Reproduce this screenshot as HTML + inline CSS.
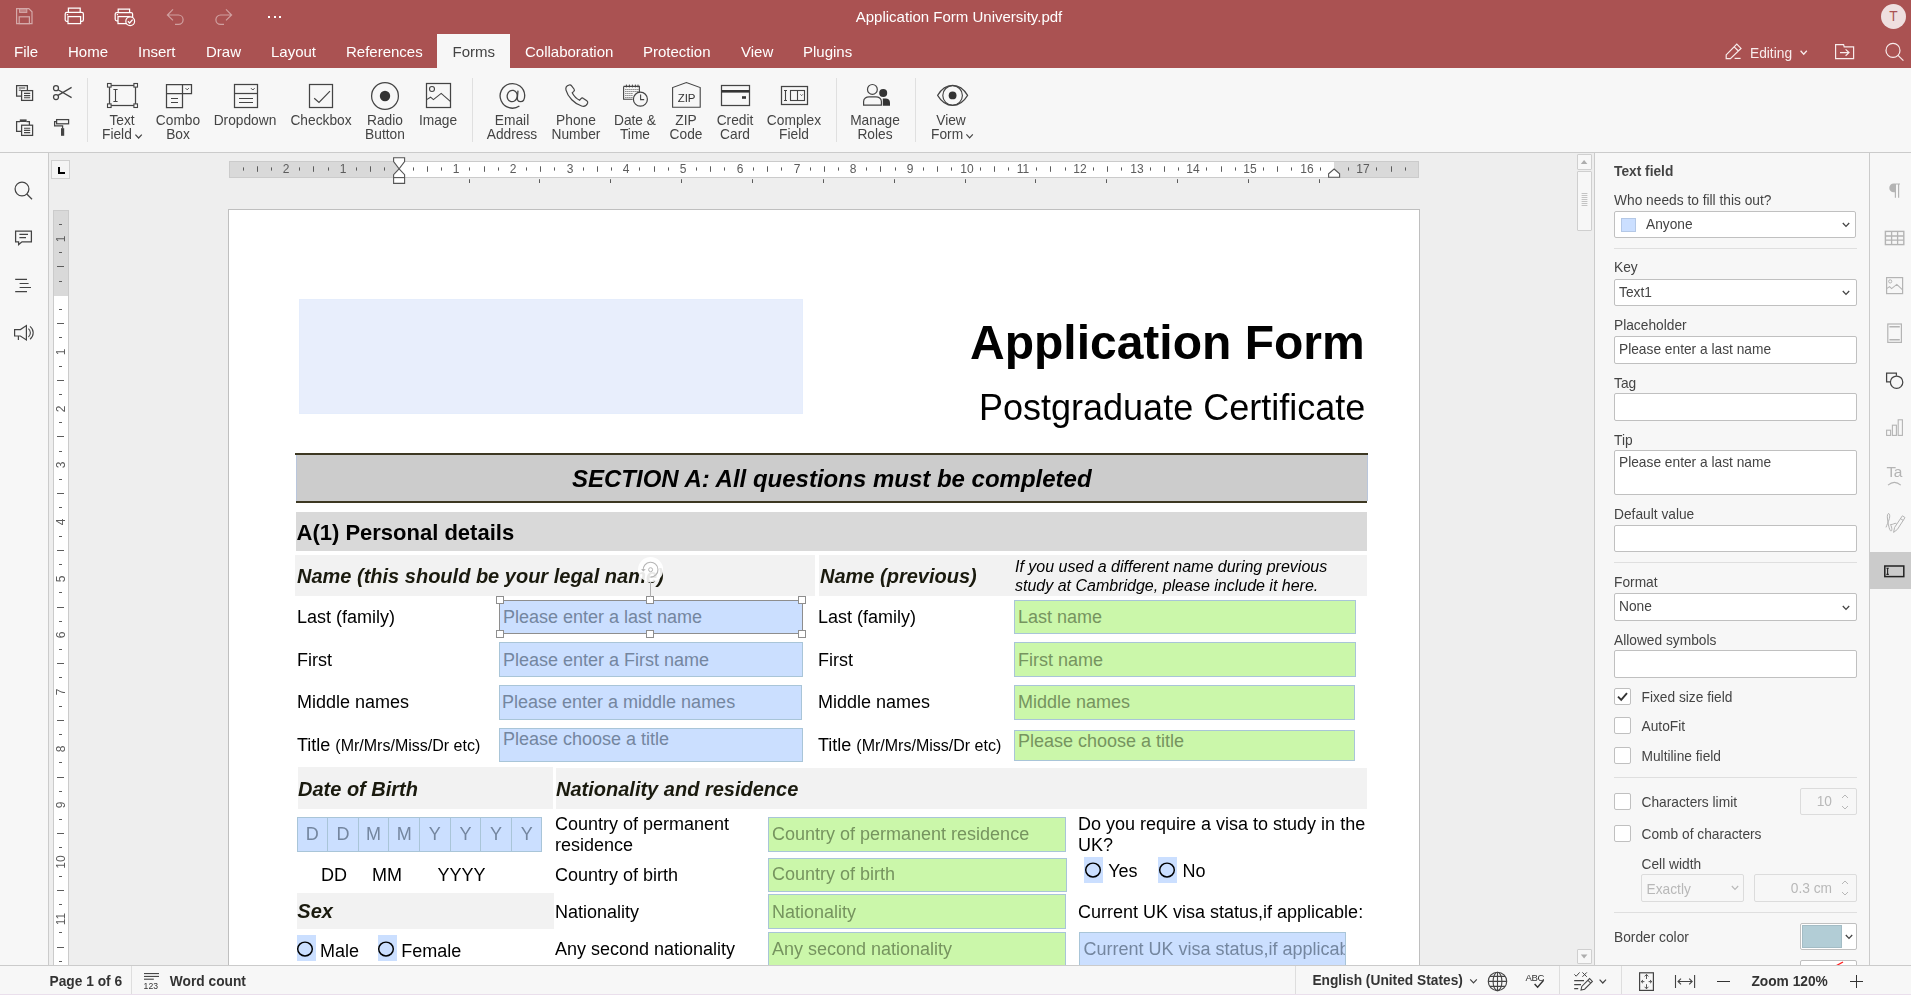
<!DOCTYPE html>
<html>
<head>
<meta charset="utf-8">
<title>Application Form University.pdf</title>
<style>
*{box-sizing:border-box;margin:0;padding:0}
html,body{width:1911px;height:995px;overflow:hidden;background:#f7f7f7;font-family:"Liberation Sans",sans-serif;color:#444}
body{opacity:.999}
.abs{position:absolute}
#hdr{position:absolute;left:0;top:0;width:1911px;height:68px;background:#aa5252}
#hdr .ttl{position:absolute;left:0;top:8px;width:1918px;text-align:center;font-size:15px;line-height:17px;color:#fff}
.tab{position:absolute;top:43px;font-size:15px;line-height:17px;color:#fff;white-space:nowrap}
#tabact{position:absolute;left:437px;top:34px;width:73px;height:34px;background:#f7f7f7}
#tabact span{position:absolute;left:15.6px;top:9px;font-size:15px;line-height:17px;color:#444}
#tb{position:absolute;left:0;top:68px;width:1911px;height:85px;background:#f7f7f7;border-bottom:1px solid #cbcbcb}
.cap{position:absolute;font-size:13.75px;line-height:14px;color:#444;text-align:center;white-space:nowrap;transform:translateX(-50%)}
.sep{position:absolute;top:10px;width:1px;height:64px;background:#e0e0e0}
svg{position:absolute;overflow:visible}
#left{position:absolute;left:0;top:153px;width:49px;height:812px;background:#f7f7f7;border-right:1px solid #cbcbcb}
#doc{position:absolute;left:49px;top:153px;width:1545px;height:812px;background:#eeeeee;overflow:hidden}
#rp{position:absolute;left:1594px;top:153px;width:276px;height:812px;background:#f7f7f7;border-left:1px solid #cbcbcb;overflow:hidden}
#ri{position:absolute;left:1869px;top:153px;width:42px;height:812px;background:#f7f7f7;border-left:1px solid #cbcbcb}
#sb{position:absolute;left:0;top:965px;width:1911px;height:30px;background:#f7f7f7;border-top:1px solid #cbcbcb}
.lbl{position:absolute;font-size:13.75px;line-height:15px;color:#444;white-space:nowrap}
.inp{position:absolute;background:#fff;border:1px solid #c0c0c0;border-radius:2px;font-size:13.75px;line-height:15px;color:#444;white-space:nowrap}
.inp span{position:absolute;left:4px;top:5px}
.chk{position:absolute;width:16px;height:16px;background:#fff;border:1px solid #c0c0c0;border-radius:2px}
.hr{position:absolute;left:19px;width:243px;height:1px;background:#dfdfdf}
#page{position:absolute;left:179px;top:56px;width:1192px;height:800px;background:#fff;border:1px solid #bfbfbf;border-bottom:none}
.t{position:absolute;white-space:nowrap;color:#000}
.fb{position:absolute;background:#cbdfff;border:1px solid #a9c5d8}
.fg{position:absolute;background:#cbf7aa;border:1px solid #a9c5d8}
.ph{position:absolute;white-space:nowrap;font-size:18px;line-height:20px}
.fb .ph{color:#74869f}
.fg .ph{color:#76945f}
</style>
</head>
<body>
<div id="hdr">
  <div class="ttl">Application Form University.pdf</div>
  <div id="tabact"><span>Forms</span></div>
  <div class="tab" style="left:14px">File</div>
  <div class="tab" style="left:68px">Home</div>
  <div class="tab" style="left:138px">Insert</div>
  <div class="tab" style="left:206px">Draw</div>
  <div class="tab" style="left:271px">Layout</div>
  <div class="tab" style="left:346px">References</div>
  <div class="tab" style="left:525px">Collaboration</div>
  <div class="tab" style="left:643px">Protection</div>
  <div class="tab" style="left:741px">View</div>
  <div class="tab" style="left:803px">Plugins</div>
  <div class="tab" style="left:1750px;top:45.5px;font-size:13.75px;line-height:15px;color:#f8ecec">Editing</div>
  <!-- save (disabled) -->
<svg style="left:16px;top:8px;opacity:.5" width="17" height="17" viewBox="0 0 17 17"><path d="M0.6 0.6 H12.8 L16 3.8 V15.6 H0.6 Z" fill="none" stroke="#fff" stroke-width="1.2"/><rect x="3.6" y="0.6" width="7.2" height="3.8" fill="#fff" fill-opacity=".55" stroke="#fff" stroke-width="1"/><rect x="3.2" y="8.8" width="10.2" height="6.8" fill="none" stroke="#fff" stroke-width="1.2"/></svg>
<!-- print -->
<svg style="left:64px;top:7px" width="21" height="18" viewBox="0 0 21 18"><rect x="1.2" y="5.4" width="18.2" height="9" rx="1.6" fill="none" stroke="#fff" stroke-width="1.25"/><path d="M4.4 5.4 V1.2 H16.2 V5.4" fill="none" stroke="#fff" stroke-width="1.25"/><rect x="4" y="9.6" width="12.6" height="7" fill="#aa5252" stroke="#fff" stroke-width="1.25"/><rect x="2.8" y="7" width="1.4" height="1.4" fill="#fff"/></svg>
<!-- quick print -->
<svg style="left:114px;top:8px" width="22" height="19" viewBox="0 0 22 19"><rect x="1.2" y="4.6" width="17.4" height="8.2" rx="1.5" fill="none" stroke="#fff" stroke-width="1.25"/><path d="M4.2 4.6 V1.2 H15.6 V4.6" fill="none" stroke="#fff" stroke-width="1.25"/><rect x="4" y="8.6" width="11.6" height="7" fill="#aa5252" stroke="#fff" stroke-width="1.25"/><rect x="2.8" y="6" width="1.3" height="1.3" fill="#fff"/><circle cx="16.2" cy="13.2" r="4.4" fill="#aa5252" stroke="#fff" stroke-width="1.2"/><path d="M13.9 13.3 L15.6 15 L18.6 11.6" fill="none" stroke="#fff" stroke-width="1.3"/></svg>
<!-- undo (disabled) -->
<svg style="left:166px;top:8px;opacity:.45" width="19" height="18" viewBox="0 0 19 18"><path d="M7 1.4 L1.4 7 L7 12.4 M1.4 7 H12.4 A4.7 4.7 0 0 1 12.4 16.4 H9" fill="none" stroke="#fff" stroke-width="1.2"/></svg>
<!-- redo (disabled) -->
<svg style="left:215px;top:8px;opacity:.45" width="19" height="18" viewBox="0 0 19 18"><path d="M11 1.4 L16.6 7 L11 12.4 M16.6 7 H5.6 A4.7 4.7 0 0 0 5.6 16.4 H9" fill="none" stroke="#fff" stroke-width="1.2"/></svg>
<!-- more -->
<div class="abs" style="left:268px;top:16px;width:2px;height:2px;background:#fff"></div>
<div class="abs" style="left:273.5px;top:16px;width:2px;height:2px;background:#fff"></div>
<div class="abs" style="left:279px;top:16px;width:2px;height:2px;background:#fff"></div>
<!-- avatar -->
<div class="abs" style="left:1881px;top:4px;width:25px;height:25px;border-radius:50%;background:#efdfdf;color:#aa5252;font-size:13.75px;line-height:25px;text-align:center">T</div>
<!-- pencil -->
<svg style="left:1725px;top:43px" width="18" height="17" viewBox="0 0 18 17"><path d="M1.2 11.8 L11.8 1.2 L16 5.4 L5.4 15.6 H1.2 Z M9.2 3.8 L13.4 8" fill="none" stroke="#f8ecec" stroke-width="1.2"/><path d="M9.6 15.4 H15.6" stroke="#f8ecec" stroke-width="1.2"/></svg>
<svg style="left:1800px;top:50px" width="8" height="6" viewBox="0 0 8 6"><path d="M0.6 0.8 L3.7 4.2 L6.8 0.8" fill="none" stroke="#f8ecec" stroke-width="1.3"/></svg>
<!-- folder -->
<svg style="left:1835px;top:44px" width="20" height="16" viewBox="0 0 20 16"><path d="M0.6 0.6 H8.6 L9.2 2.8 H18.6 V14.6 H0.6 Z" fill="none" stroke="#f8ecec" stroke-width="1.2"/><path d="M5 8.6 H14 M10.6 5.4 L14 8.6 L10.6 11.8" fill="none" stroke="#f8ecec" stroke-width="1.2"/></svg>
<!-- search -->
<svg style="left:1884px;top:42px" width="22" height="22" viewBox="0 0 22 22"><circle cx="9" cy="8.4" r="7" fill="none" stroke="#f8ecec" stroke-width="1.2"/><path d="M14 13.4 L19.4 18.6" stroke="#f8ecec" stroke-width="1.2"/></svg>

</div>
<div id="tb">
<div class="cap" style="left:122px;top:46px">Text</div>
<div class="cap" style="left:102px;top:60px;transform:none">Field</div>
<div class="cap" style="left:178px;top:46px">Combo</div>
<div class="cap" style="left:178px;top:60px">Box</div>
<div class="cap" style="left:245px;top:46px">Dropdown</div>
<div class="cap" style="left:321px;top:46px">Checkbox</div>
<div class="cap" style="left:385px;top:46px">Radio</div>
<div class="cap" style="left:385px;top:60px">Button</div>
<div class="cap" style="left:438px;top:46px">Image</div>
<div class="cap" style="left:512px;top:46px">Email</div>
<div class="cap" style="left:512px;top:60px">Address</div>
<div class="cap" style="left:576px;top:46px">Phone</div>
<div class="cap" style="left:576px;top:60px">Number</div>
<div class="cap" style="left:635px;top:46px">Date &amp;</div>
<div class="cap" style="left:635px;top:60px">Time</div>
<div class="cap" style="left:686px;top:46px">ZIP</div>
<div class="cap" style="left:686px;top:60px">Code</div>
<div class="cap" style="left:735px;top:46px">Credit</div>
<div class="cap" style="left:735px;top:60px">Card</div>
<div class="cap" style="left:794px;top:46px">Complex</div>
<div class="cap" style="left:794px;top:60px">Field</div>
<div class="cap" style="left:875px;top:46px">Manage</div>
<div class="cap" style="left:875px;top:60px">Roles</div>
<div class="cap" style="left:951px;top:46px">View</div>
<div class="cap" style="left:931px;top:60px;transform:none">Form</div>
<div class="sep" style="left:87px"></div>
<div class="sep" style="left:472px"></div>
<div class="sep" style="left:836px"></div>
<div class="sep" style="left:915px"></div>
<svg style="left:15px;top:16px;" width="20" height="18" viewBox="15 84 20 18" fill="none" stroke="#444" stroke-width="1.25"><path d="M27.4 90.5 V85.6 H16.6 V96 H21.5" /><path d="M18.8 88 H25.2 M18.8 90.2 H21" stroke-width="1"/><rect x="21.6" y="90.6" width="11" height="9.8" fill="#f7f7f7"/><path d="M24 93.4 H30.2 M24 95.6 H30.2 M24 97.8 H30.2" stroke-width="1.1"/></svg>
<svg style="left:52px;top:16px;" width="21" height="18" viewBox="52 84 21 18" fill="none" stroke="#444" stroke-width="1.25"><circle cx="56" cy="88.2" r="2.5"/><circle cx="56" cy="97" r="2.5"/><path d="M58 89.8 L71.6 97.6 M58 95.4 L71.6 87.4"/></svg>
<svg style="left:15px;top:50px;" width="20" height="19" viewBox="15 118 20 19" fill="none" stroke="#444" stroke-width="1.25"><path d="M20 121.6 H16.6 V131.4 H21.4 M26.4 121.6 H29.4 V125"/><rect x="19.8" y="119.4" width="6.8" height="2.6" fill="#444" stroke="none"/><rect x="21.6" y="125.2" width="11" height="10.2" fill="#f7f7f7"/><path d="M24 128.2 H30.2 M24 130.4 H30.2 M24 132.6 H30.2" stroke-width="1.1"/></svg>
<svg style="left:53px;top:50px;" width="18" height="19" viewBox="53 118 18 19" fill="none" stroke="#444" stroke-width="1.25"><rect x="56.6" y="119.6" width="12" height="4.2"/><path d="M56.6 121.6 H54.6 V125.8 H62.6 V128.4"/><rect x="61" y="128.2" width="3.2" height="7.6" fill="#444" stroke="none"/></svg>
<svg style="left:106px;top:14px;" width="34" height="28" viewBox="106 82 34 28" fill="none" stroke="#444" stroke-width="1.25"><rect x="109.5" y="85.5" width="26" height="20"/><rect x="107.5" y="83.5" width="3.6" height="3.6" fill="#f7f7f7" stroke-width="1.1"/><rect x="107.5" y="103.9" width="3.6" height="3.6" fill="#f7f7f7" stroke-width="1.1"/><rect x="133.9" y="83.5" width="3.6" height="3.6" fill="#f7f7f7" stroke-width="1.1"/><rect x="133.9" y="103.9" width="3.6" height="3.6" fill="#f7f7f7" stroke-width="1.1"/><path d="M115.5 89.5 V101.5 M113.4 89.5 H117.6 M113.4 101.5 H117.6" stroke-width="1.1"/></svg>
<svg style="left:134px;top:65px;" width="10" height="7" viewBox="134 133 10 7" fill="none" stroke="#444" stroke-width="1.25"><path d="M135.4 134.6 L138.6 138 L141.8 134.6" stroke-width="1.2"/></svg>
<svg style="left:965px;top:65px;" width="10" height="7" viewBox="965 133 10 7" fill="none" stroke="#444" stroke-width="1.25"><path d="M966.4 134.4 L969.6 137.8 L972.8 134.4" stroke-width="1.2"/></svg>
<svg style="left:165px;top:15px;" width="28" height="26" viewBox="165 83 28 26" fill="none" stroke="#444" stroke-width="1.25"><path d="M166.5 84.5 H191.5 V93.5 H182.5 V107.5 H166.5 Z M166.5 93.5 H182.5 M182.5 84.5 V93.5"/><path d="M185.6 88.2 L187.2 89.8 L188.8 88.2" stroke-width="1"/><path d="M171 98.5 H178 M171 102.5 H178" stroke-width="1.1"/></svg>
<svg style="left:233px;top:15px;" width="27" height="26" viewBox="233 83 27 26" fill="none" stroke="#444" stroke-width="1.25"><rect x="234.5" y="84.5" width="23" height="23"/><path d="M234.5 93.5 H257.5"/><path d="M251 88.2 L252.8 90 L254.6 88.2" stroke-width="1"/><path d="M239 98.5 H253 M239 102.5 H253" stroke-width="1.1"/></svg>
<svg style="left:308px;top:15px;" width="27" height="26" viewBox="308 83 27 26" fill="none" stroke="#444" stroke-width="1.25"><rect x="309.5" y="84.5" width="23" height="23"/><path d="M314.2 98.2 L319 102.4 L330 91.2" stroke-width="1.2"/></svg>
<svg style="left:370px;top:13px;" width="30" height="30" viewBox="370 81 30 30" fill="none" stroke="#444" stroke-width="1.25"><circle cx="385" cy="96" r="13.4"/><circle cx="385" cy="96" r="5.2" fill="#333" stroke="none"/></svg>
<svg style="left:425px;top:14px;" width="27" height="27" viewBox="425 82 27 27" fill="none" stroke="#444" stroke-width="1.25"><rect x="426.5" y="83.5" width="24" height="24"/><circle cx="432" cy="89" r="2.5" stroke-width="1.1"/><path d="M426.6 99.6 L430.6 97.2 L433.4 99.6 L441.2 93.4 L450.6 101.6" stroke-width="1.1"/></svg>
<svg style="left:563px;top:15px;" width="27" height="26" viewBox="563 83 27 26" fill="none" stroke="#444" stroke-width="1.25"><path d="M569.2 85 C567 85.6 565.4 87.6 566 90.2 C567.6 96.6 574.6 104 581.6 106 C584.2 106.8 586.6 105.4 587.6 103.2 C588 102.2 587.6 101.4 586.8 100.8 L583.4 98.4 C582.6 97.8 581.6 98 581 98.6 L579.6 100.2 C577 99 573.6 95.6 572.2 92.8 L573.8 91.4 C574.4 90.8 574.6 89.8 574 89 L571.6 85.8 C571 85 570.2 84.8 569.2 85 Z" stroke-width="1.2"/></svg>
<svg style="left:622px;top:15px;" width="27" height="26" viewBox="622 83 27 26" fill="none" stroke="#444" stroke-width="1.25"><path d="M623.6 86.4 H639.4 V92 M623.6 86.4 V99.2 H632.6" stroke-width="1.1"/><path d="M626.4 84.6 V87.4 M629.4 84.6 V87.4 M632.4 84.6 V87.4 M635.4 84.6 V87.4 M638 84.6 V87.4" stroke-width="1"/><rect x="625.4" y="89" width="1" height="1" fill="#555" stroke="none"/><rect x="625.4" y="91" width="1" height="1" fill="#555" stroke="none"/><rect x="625.4" y="93" width="1" height="1" fill="#555" stroke="none"/><rect x="625.4" y="95" width="1" height="1" fill="#555" stroke="none"/><rect x="625.4" y="97" width="1" height="1" fill="#555" stroke="none"/><rect x="627.4" y="89" width="1" height="1" fill="#555" stroke="none"/><rect x="627.4" y="91" width="1" height="1" fill="#555" stroke="none"/><rect x="627.4" y="93" width="1" height="1" fill="#555" stroke="none"/><rect x="627.4" y="95" width="1" height="1" fill="#555" stroke="none"/><rect x="627.4" y="97" width="1" height="1" fill="#555" stroke="none"/><rect x="629.4" y="89" width="1" height="1" fill="#555" stroke="none"/><rect x="629.4" y="91" width="1" height="1" fill="#555" stroke="none"/><rect x="629.4" y="93" width="1" height="1" fill="#555" stroke="none"/><rect x="629.4" y="95" width="1" height="1" fill="#555" stroke="none"/><rect x="629.4" y="97" width="1" height="1" fill="#555" stroke="none"/><rect x="631.4" y="89" width="1" height="1" fill="#555" stroke="none"/><rect x="631.4" y="91" width="1" height="1" fill="#555" stroke="none"/><rect x="631.4" y="93" width="1" height="1" fill="#555" stroke="none"/><rect x="631.4" y="95" width="1" height="1" fill="#555" stroke="none"/><rect x="631.4" y="97" width="1" height="1" fill="#555" stroke="none"/><rect x="633.4" y="89" width="1" height="1" fill="#555" stroke="none"/><rect x="633.4" y="91" width="1" height="1" fill="#555" stroke="none"/><rect x="635.4" y="89" width="1" height="1" fill="#555" stroke="none"/><rect x="635.4" y="91" width="1" height="1" fill="#555" stroke="none"/><rect x="637.4" y="89" width="1" height="1" fill="#555" stroke="none"/><rect x="637.4" y="91" width="1" height="1" fill="#555" stroke="none"/><circle cx="640.4" cy="99.2" r="7" fill="#f7f7f7" stroke-width="1.2"/><path d="M640.6 94.6 V99.6 H644.2" stroke-width="1.1"/></svg>
<svg style="left:671px;top:13px;" width="31" height="28" viewBox="671 81 31 28" fill="none" stroke="#444" stroke-width="1.25"><path d="M672.6 107.2 V87.6 L686.4 82.6 L700.2 87.6 V107.2 Z" stroke-width="1.1"/></svg>
<div class="abs" style="left:666.5px;top:24px;width:40px;text-align:center;font-size:11.5px;line-height:12px;color:#333;letter-spacing:-0.2px">ZIP</div>
<svg style="left:720px;top:16px;" width="31" height="23" viewBox="720 84 31 23" fill="none" stroke="#444" stroke-width="1.25"><rect x="721.5" y="85.5" width="28" height="20"/><rect x="721.5" y="90" width="28" height="2.6" fill="#333" stroke="none"/><rect x="742" y="96.2" width="4" height="2.6" fill="#333" stroke="none"/></svg>
<svg style="left:780px;top:17px;" width="30" height="21" viewBox="780 85 30 21" fill="none" stroke="#444" stroke-width="1.25"><rect x="781.5" y="86.5" width="26" height="18"/><path d="M785.5 90 V101 M784 90.5 H787 M784 100.5 H787" stroke-width="1.1"/><rect x="790.5" y="90.5" width="14" height="10" stroke-width="1.1"/><path d="M797.5 90.5 V100.5" stroke-width="1.1"/><path d="M800.4 94.4 L801.6 95.6 L802.8 94.4" stroke-width="0.9"/></svg>
<svg style="left:862px;top:15px;" width="30" height="24" viewBox="862 83 30 24" fill="none" stroke="#444" stroke-width="1.25"><circle cx="872.4" cy="89.4" r="4.9" stroke-width="1.2"/><path d="M863.6 105.2 V101.6 C863.6 98.6 866.4 96.8 869 96.8 H876 C878.6 96.8 881.4 98.6 881.4 101.6 V105.2 Z" stroke-width="1.2"/><circle cx="883.2" cy="93" r="4" fill="#333" stroke="none"/><path d="M882.8 98.4 H885.8 C888 98.4 890 100 890 102.4 V105.8 H882.8 Z" fill="#333" stroke="none"/></svg>
<svg style="left:936px;top:15px;" width="34" height="25" viewBox="936 83 34 25" fill="none" stroke="#444" stroke-width="1.25"><path d="M937.6 95.4 C942 88 947 85.4 952.6 85.4 C958.2 85.4 963.2 88 967.6 95.4 C963.2 102.8 958.2 105.4 952.6 105.4 C947 105.4 942 102.8 937.6 95.4 Z" stroke-width="1.15"/><circle cx="952.6" cy="95.4" r="9.8" stroke-width="1.15"/><circle cx="952.6" cy="95.4" r="3.9" fill="#333" stroke="none"/></svg>
<svg style="left:498px;top:14px;" width="29" height="28" viewBox="498 82 29 28" fill="none" stroke="#444" stroke-width="1.25"><path d="M519.4 106 A12.3 12.3 0 1 1 524.7 95.4 C524.7 99.4 522.8 101.6 520.4 101.6 C518.2 101.6 517.2 100.2 517.4 97.6 L518 90.6" stroke-width="1.3"/><ellipse cx="512.2" cy="96" rx="5" ry="5.7" transform="rotate(12 512.2 96)" stroke-width="1.3"/></svg>
<!--TBICONS-->
</div>
<div id="left">
<svg style="left:13px;top:27px" width="22" height="22" viewBox="13 180 22 22" fill="none" stroke="#444" stroke-width="1.25"><circle cx="22" cy="189" r="6.9"/><path d="M26.8 194 L32 199.2"/></svg>
<svg style="left:14px;top:76px" width="20" height="18" viewBox="14 229 20 18" fill="none" stroke="#444" stroke-width="1.25"><path d="M15.6 231 H31.4 V241.8 H22 L18.6 244.6 V241.8 H15.6 Z"/><path d="M19.4 234.4 H28 M19.4 237.6 H26" stroke-width="1.1"/></svg>
<svg style="left:14px;top:124px" width="19" height="17" viewBox="14 277 19 17" fill="none" stroke="#444" stroke-width="1.25"><path d="M15.2 279.4 H27 M19.6 283.5 H28.6 M19.6 287.5 H31 M15.2 291.6 H27" stroke-width="1.2"/></svg>
<svg style="left:13px;top:171px" width="22" height="18" viewBox="13 324 22 18" fill="none" stroke="#444" stroke-width="1.25"><path d="M14.6 329.6 H20.4 L26.4 325.6 V340 L20.4 336 H14.6 Z M18.4 336 V340" stroke-width="1.2"/><path d="M28.4 328.6 A5.4 5.4 0 0 1 28.4 337 M30 326.4 A8 8 0 0 1 30 339.2" stroke-width="1.1"/></svg>
</div>
<div id="doc">
<div class="abs" style="left:2.00px;top:7.00px;width:19.00px;height:19.00px;background:#f4f4f4;border:1px solid #cfcfcf"></div>
<div class="abs" style="left:8.60px;top:13.60px;width:2.40px;height:7.40px;background:#000"></div>
<div class="abs" style="left:8.60px;top:18.60px;width:7.40px;height:2.40px;background:#000"></div>
<div class="abs" style="left:180.00px;top:8.00px;width:1190.00px;height:17.00px;background:#fff;border:1px solid #cbcbcb"></div>
<div class="abs" style="left:181.00px;top:9.00px;width:169.00px;height:15.00px;background:#d9d9d9"></div>
<div class="abs" style="left:1285.00px;top:9.00px;width:84.00px;height:15.00px;background:#d9d9d9"></div>
<div class="abs" style="left:217.31px;top:9.599999999999994px;width:40px;text-align:center;font-size:12px;line-height:12px;color:#5c5c5c;will-change:transform">2</div>
<div class="abs" style="left:274.01px;top:9.599999999999994px;width:40px;text-align:center;font-size:12px;line-height:12px;color:#5c5c5c;will-change:transform">1</div>
<div class="abs" style="left:387.39px;top:9.599999999999994px;width:40px;text-align:center;font-size:12px;line-height:12px;color:#5c5c5c;will-change:transform">1</div>
<div class="abs" style="left:444.09px;top:9.599999999999994px;width:40px;text-align:center;font-size:12px;line-height:12px;color:#5c5c5c;will-change:transform">2</div>
<div class="abs" style="left:500.78px;top:9.599999999999994px;width:40px;text-align:center;font-size:12px;line-height:12px;color:#5c5c5c;will-change:transform">3</div>
<div class="abs" style="left:557.47px;top:9.599999999999994px;width:40px;text-align:center;font-size:12px;line-height:12px;color:#5c5c5c;will-change:transform">4</div>
<div class="abs" style="left:614.16px;top:9.599999999999994px;width:40px;text-align:center;font-size:12px;line-height:12px;color:#5c5c5c;will-change:transform">5</div>
<div class="abs" style="left:670.86px;top:9.599999999999994px;width:40px;text-align:center;font-size:12px;line-height:12px;color:#5c5c5c;will-change:transform">6</div>
<div class="abs" style="left:727.55px;top:9.599999999999994px;width:40px;text-align:center;font-size:12px;line-height:12px;color:#5c5c5c;will-change:transform">7</div>
<div class="abs" style="left:784.24px;top:9.599999999999994px;width:40px;text-align:center;font-size:12px;line-height:12px;color:#5c5c5c;will-change:transform">8</div>
<div class="abs" style="left:840.94px;top:9.599999999999994px;width:40px;text-align:center;font-size:12px;line-height:12px;color:#5c5c5c;will-change:transform">9</div>
<div class="abs" style="left:897.63px;top:9.599999999999994px;width:40px;text-align:center;font-size:12px;line-height:12px;color:#5c5c5c;will-change:transform">10</div>
<div class="abs" style="left:954.32px;top:9.599999999999994px;width:40px;text-align:center;font-size:12px;line-height:12px;color:#5c5c5c;will-change:transform">11</div>
<div class="abs" style="left:1011.02px;top:9.599999999999994px;width:40px;text-align:center;font-size:12px;line-height:12px;color:#5c5c5c;will-change:transform">12</div>
<div class="abs" style="left:1067.71px;top:9.599999999999994px;width:40px;text-align:center;font-size:12px;line-height:12px;color:#5c5c5c;will-change:transform">13</div>
<div class="abs" style="left:1124.40px;top:9.599999999999994px;width:40px;text-align:center;font-size:12px;line-height:12px;color:#5c5c5c;will-change:transform">14</div>
<div class="abs" style="left:1181.10px;top:9.599999999999994px;width:40px;text-align:center;font-size:12px;line-height:12px;color:#5c5c5c;will-change:transform">15</div>
<div class="abs" style="left:1237.79px;top:9.599999999999994px;width:40px;text-align:center;font-size:12px;line-height:12px;color:#5c5c5c;will-change:transform">16</div>
<div class="abs" style="left:1294.48px;top:9.599999999999994px;width:40px;text-align:center;font-size:12px;line-height:12px;color:#5c5c5c;will-change:transform">17</div>
<svg style="left:180px;top:7px" width="1190" height="26" viewBox="229 160 1190 26" fill="#5c5c5c" stroke="none"><rect x="243" y="167.4" width="1" height="3.2"/><rect x="257" y="166.3" width="1" height="5.5"/><rect x="271" y="167.4" width="1" height="3.2"/><rect x="299" y="167.4" width="1" height="3.2"/><rect x="313" y="166.3" width="1" height="5.5"/><rect x="328" y="167.4" width="1" height="3.2"/><rect x="356" y="167.4" width="1" height="3.2"/><rect x="370" y="166.3" width="1" height="5.5"/><rect x="384" y="167.4" width="1" height="3.2"/><rect x="413" y="167.4" width="1" height="3.2"/><rect x="427" y="166.3" width="1" height="5.5"/><rect x="441" y="167.4" width="1" height="3.2"/><rect x="469" y="167.4" width="1" height="3.2"/><rect x="484" y="166.3" width="1" height="5.5"/><rect x="498" y="167.4" width="1" height="3.2"/><rect x="526" y="167.4" width="1" height="3.2"/><rect x="540" y="166.3" width="1" height="5.5"/><rect x="554" y="167.4" width="1" height="3.2"/><rect x="583" y="167.4" width="1" height="3.2"/><rect x="597" y="166.3" width="1" height="5.5"/><rect x="611" y="167.4" width="1" height="3.2"/><rect x="639" y="167.4" width="1" height="3.2"/><rect x="654" y="166.3" width="1" height="5.5"/><rect x="668" y="167.4" width="1" height="3.2"/><rect x="696" y="167.4" width="1" height="3.2"/><rect x="710" y="166.3" width="1" height="5.5"/><rect x="724" y="167.4" width="1" height="3.2"/><rect x="753" y="167.4" width="1" height="3.2"/><rect x="767" y="166.3" width="1" height="5.5"/><rect x="781" y="167.4" width="1" height="3.2"/><rect x="810" y="167.4" width="1" height="3.2"/><rect x="824" y="166.3" width="1" height="5.5"/><rect x="838" y="167.4" width="1" height="3.2"/><rect x="866" y="167.4" width="1" height="3.2"/><rect x="880" y="166.3" width="1" height="5.5"/><rect x="895" y="167.4" width="1" height="3.2"/><rect x="923" y="167.4" width="1" height="3.2"/><rect x="937" y="166.3" width="1" height="5.5"/><rect x="951" y="167.4" width="1" height="3.2"/><rect x="980" y="167.4" width="1" height="3.2"/><rect x="994" y="166.3" width="1" height="5.5"/><rect x="1008" y="167.4" width="1" height="3.2"/><rect x="1036" y="167.4" width="1" height="3.2"/><rect x="1050" y="166.3" width="1" height="5.5"/><rect x="1065" y="167.4" width="1" height="3.2"/><rect x="1093" y="167.4" width="1" height="3.2"/><rect x="1107" y="166.3" width="1" height="5.5"/><rect x="1121" y="167.4" width="1" height="3.2"/><rect x="1150" y="167.4" width="1" height="3.2"/><rect x="1164" y="166.3" width="1" height="5.5"/><rect x="1178" y="167.4" width="1" height="3.2"/><rect x="1206" y="167.4" width="1" height="3.2"/><rect x="1221" y="166.3" width="1" height="5.5"/><rect x="1235" y="167.4" width="1" height="3.2"/><rect x="1263" y="167.4" width="1" height="3.2"/><rect x="1277" y="166.3" width="1" height="5.5"/><rect x="1291" y="167.4" width="1" height="3.2"/><rect x="1320" y="167.4" width="1" height="3.2"/><rect x="1348" y="167.4" width="1" height="3.2"/><rect x="1376" y="167.4" width="1" height="3.2"/><rect x="1391" y="166.3" width="1" height="5.5"/><rect x="1405" y="167.4" width="1" height="3.2"/><rect x="469" y="179.2" width="1" height="3.8"/><rect x="539" y="179.2" width="1" height="3.8"/><rect x="610" y="179.2" width="1" height="3.8"/><rect x="681" y="179.2" width="1" height="3.8"/><rect x="752" y="179.2" width="1" height="3.8"/><rect x="823" y="179.2" width="1" height="3.8"/><rect x="894" y="179.2" width="1" height="3.8"/><rect x="965" y="179.2" width="1" height="3.8"/><rect x="1035" y="179.2" width="1" height="3.8"/><rect x="1106" y="179.2" width="1" height="3.8"/><rect x="1177" y="179.2" width="1" height="3.8"/><rect x="1248" y="179.2" width="1" height="3.8"/><rect x="1319" y="179.2" width="1" height="3.8"/></svg>
<svg style="left:342px;top:3px" width="16" height="30" viewBox="391 156 16 30" fill="none" stroke="#555" stroke-width="1.25"><path d="M393.6 157.8 H404.6 V161.6 L399.1 168.8 L393.6 161.6 Z" fill="#fff" stroke-width="1.1"/><path d="M399.1 168.8 L404.6 174.6 V183.4 H393.6 V174.6 Z" fill="#fff" stroke-width="1.1"/><path d="M393.6 177.6 H404.6" stroke-width="1.1"/></svg>
<svg style="left:1276px;top:13px" width="16" height="14" viewBox="1325 166 16 14" fill="none" stroke="#555" stroke-width="1.25"><path d="M1334.1 169 L1339.6 173.8 V177.3 H1328.6 V173.8 Z" fill="#fff" stroke-width="1.1"/></svg>
<div class="abs" style="left:4.00px;top:57.00px;width:16.00px;height:756.00px;background:#fff;border:1px solid #cbcbcb;border-bottom:none"></div>
<div class="abs" style="left:5.00px;top:58.00px;width:14.00px;height:84.70px;background:#d9d9d9"></div>
<div class="abs" style="left:-7.60px;top:79.51px;width:40px;height:12px;text-align:center;font-size:12px;line-height:12px;color:#5c5c5c;transform:rotate(-90deg)">1</div>
<div class="abs" style="left:-7.60px;top:192.89px;width:40px;height:12px;text-align:center;font-size:12px;line-height:12px;color:#5c5c5c;transform:rotate(-90deg)">1</div>
<div class="abs" style="left:-7.60px;top:249.59px;width:40px;height:12px;text-align:center;font-size:12px;line-height:12px;color:#5c5c5c;transform:rotate(-90deg)">2</div>
<div class="abs" style="left:-7.60px;top:306.28px;width:40px;height:12px;text-align:center;font-size:12px;line-height:12px;color:#5c5c5c;transform:rotate(-90deg)">3</div>
<div class="abs" style="left:-7.60px;top:362.97px;width:40px;height:12px;text-align:center;font-size:12px;line-height:12px;color:#5c5c5c;transform:rotate(-90deg)">4</div>
<div class="abs" style="left:-7.60px;top:419.66px;width:40px;height:12px;text-align:center;font-size:12px;line-height:12px;color:#5c5c5c;transform:rotate(-90deg)">5</div>
<div class="abs" style="left:-7.60px;top:476.36px;width:40px;height:12px;text-align:center;font-size:12px;line-height:12px;color:#5c5c5c;transform:rotate(-90deg)">6</div>
<div class="abs" style="left:-7.60px;top:533.05px;width:40px;height:12px;text-align:center;font-size:12px;line-height:12px;color:#5c5c5c;transform:rotate(-90deg)">7</div>
<div class="abs" style="left:-7.60px;top:589.74px;width:40px;height:12px;text-align:center;font-size:12px;line-height:12px;color:#5c5c5c;transform:rotate(-90deg)">8</div>
<div class="abs" style="left:-7.60px;top:646.44px;width:40px;height:12px;text-align:center;font-size:12px;line-height:12px;color:#5c5c5c;transform:rotate(-90deg)">9</div>
<div class="abs" style="left:-7.60px;top:703.13px;width:40px;height:12px;text-align:center;font-size:12px;line-height:12px;color:#5c5c5c;transform:rotate(-90deg)">10</div>
<div class="abs" style="left:-7.60px;top:759.82px;width:40px;height:12px;text-align:center;font-size:12px;line-height:12px;color:#5c5c5c;transform:rotate(-90deg)">11</div>
<svg style="left:4px;top:57px" width="16" height="756" viewBox="53 210 16 756" fill="#5c5c5c" stroke="none"><rect x="59" y="224" width="3" height="1"/><rect x="59" y="252" width="3" height="1"/><rect x="57" y="266" width="7" height="1"/><rect x="59" y="281" width="3" height="1"/><rect x="59" y="309" width="3" height="1"/><rect x="57" y="323" width="7" height="1"/><rect x="59" y="337" width="3" height="1"/><rect x="59" y="366" width="3" height="1"/><rect x="57" y="380" width="7" height="1"/><rect x="59" y="394" width="3" height="1"/><rect x="59" y="422" width="3" height="1"/><rect x="57" y="436" width="7" height="1"/><rect x="59" y="451" width="3" height="1"/><rect x="59" y="479" width="3" height="1"/><rect x="57" y="493" width="7" height="1"/><rect x="59" y="507" width="3" height="1"/><rect x="59" y="536" width="3" height="1"/><rect x="57" y="550" width="7" height="1"/><rect x="59" y="564" width="3" height="1"/><rect x="59" y="592" width="3" height="1"/><rect x="57" y="607" width="7" height="1"/><rect x="59" y="621" width="3" height="1"/><rect x="59" y="649" width="3" height="1"/><rect x="57" y="663" width="7" height="1"/><rect x="59" y="677" width="3" height="1"/><rect x="59" y="706" width="3" height="1"/><rect x="57" y="720" width="7" height="1"/><rect x="59" y="734" width="3" height="1"/><rect x="59" y="762" width="3" height="1"/><rect x="57" y="777" width="7" height="1"/><rect x="59" y="791" width="3" height="1"/><rect x="59" y="819" width="3" height="1"/><rect x="57" y="833" width="7" height="1"/><rect x="59" y="847" width="3" height="1"/><rect x="59" y="876" width="3" height="1"/><rect x="57" y="890" width="7" height="1"/><rect x="59" y="904" width="3" height="1"/><rect x="59" y="932" width="3" height="1"/><rect x="57" y="947" width="7" height="1"/><rect x="59" y="961" width="3" height="1"/></svg>
<div id="page">
<div class="abs" style="left:70.00px;top:89.00px;width:504.00px;height:115.00px;background:#e8eefc;box-shadow:inset 0 0 0 1px #e5edfc"></div>
<div class="t" style="left:741.00px;top:109.37px;font-size:48px;line-height:48px;color:#000;font-weight:bold">Application Form</div>
<div class="t" style="left:750.00px;top:179.53px;font-size:36px;line-height:36px;color:#000;">Postgraduate Certificate</div>
<div class="abs" style="left:67.00px;top:245.00px;width:1071.00px;height:46.00px;background:#cccccc"></div>
<div class="abs" style="left:66.00px;top:243.00px;width:1072.50px;height:2.00px;background:#3d3822"></div>
<div class="abs" style="left:67.00px;top:291.00px;width:1071.00px;height:2.00px;background:#3d3822"></div>
<div class="abs" style="left:67.00px;top:245.00px;width:0.60px;height:46.00px;background:#b9c6dc"></div>
<div class="abs" style="left:1137.60px;top:245.00px;width:0.60px;height:46.00px;background:#b9c6dc"></div>
<div class="t" style="left:343.00px;top:256.68px;font-size:24px;line-height:24px;color:#000;font-weight:bold;font-style:italic;">SECTION A: All questions must be completed</div>
<div class="abs" style="left:67.00px;top:302.00px;width:1071.00px;height:39.00px;background:#d9d9d9"></div>
<div class="t" style="left:67.50px;top:312.38px;font-size:22px;line-height:22px;color:#000;font-weight:bold">A(1) Personal details</div>
<div class="abs" style="left:66.00px;top:345.00px;width:519.50px;height:41.00px;background:#f2f2f2"></div>
<div class="abs" style="left:589.50px;top:345.00px;width:548.50px;height:40.50px;background:#f2f2f2"></div>
<div class="t" style="left:68.00px;top:356.07px;font-size:20px;line-height:20px;color:#1a1a0e;font-weight:bold;font-style:italic;">Name (this should be your legal name)</div>
<div class="t" style="left:591.00px;top:356.07px;font-size:20px;line-height:20px;color:#1a1a0e;font-weight:bold;font-style:italic;">Name (previous)</div>
<div class="t" style="left:786.00px;top:349.46px;font-size:16px;line-height:16px;color:#000;font-style:italic">If you used a different name during previous</div>
<div class="t" style="left:786.00px;top:368.46px;font-size:16px;line-height:16px;color:#000;font-style:italic">study at Cambridge, please include it here.</div>
<div class="t" style="left:68.00px;top:397.76px;font-size:18px;line-height:18px;color:#000;">Last (family)</div>
<div class="fb" style="left:270.00px;top:390.00px;width:304.00px;height:34.00px;"></div>
<div class="t" style="left:274.00px;top:397.76px;font-size:18px;line-height:18px;color:#74869f;">Please enter a last name</div>
<div class="t" style="left:68.00px;top:441.06px;font-size:18px;line-height:18px;color:#000;">First</div>
<div class="fb" style="left:270.00px;top:432.00px;width:304.00px;height:34.50px;"></div>
<div class="t" style="left:274.00px;top:441.06px;font-size:18px;line-height:18px;color:#74869f;">Please enter a First name</div>
<div class="t" style="left:68.00px;top:482.76px;font-size:18px;line-height:18px;color:#000;">Middle names</div>
<div class="fb" style="left:270.00px;top:475.00px;width:303.00px;height:34.50px;"></div>
<div class="t" style="left:273.00px;top:482.76px;font-size:18px;line-height:18px;color:#74869f;">Please enter a middle names</div>
<div class="t" style="left:68.00px;top:525.76px;font-size:18px;line-height:18px;color:#000;">Title <span style="font-size:16px">(Mr/Mrs/Miss/Dr etc)</span></div>
<div class="fb" style="left:270.00px;top:518.00px;width:304.00px;height:33.50px;"></div>
<div class="t" style="left:274.00px;top:519.76px;font-size:18px;line-height:18px;color:#74869f;">Please choose a title</div>
<div class="t" style="left:589.00px;top:397.76px;font-size:18px;line-height:18px;color:#000;">Last (family)</div>
<div class="fg" style="left:785.00px;top:390.00px;width:342.00px;height:33.50px;"></div>
<div class="t" style="left:789.00px;top:397.76px;font-size:18px;line-height:18px;color:#76945f;">Last name</div>
<div class="t" style="left:589.00px;top:441.06px;font-size:18px;line-height:18px;color:#000;">First</div>
<div class="fg" style="left:785.00px;top:432.00px;width:342.00px;height:34.50px;"></div>
<div class="t" style="left:789.00px;top:441.06px;font-size:18px;line-height:18px;color:#76945f;">First name</div>
<div class="t" style="left:589.00px;top:482.76px;font-size:18px;line-height:18px;color:#000;">Middle names</div>
<div class="fg" style="left:785.00px;top:475.00px;width:341.00px;height:34.50px;"></div>
<div class="t" style="left:789.00px;top:482.76px;font-size:18px;line-height:18px;color:#76945f;">Middle names</div>
<div class="t" style="left:589.00px;top:525.76px;font-size:18px;line-height:18px;color:#000;">Title <span style="font-size:16px">(Mr/Mrs/Miss/Dr etc)</span></div>
<div class="fg" style="left:785.00px;top:520.00px;width:341.00px;height:30.50px;"></div>
<div class="t" style="left:789.00px;top:522.06px;font-size:18px;line-height:18px;color:#76945f;">Please choose a title</div>
<div class="abs" style="left:270.00px;top:390.00px;width:304.00px;height:34.00px;border:1px solid #8e8e8e;background:none"></div>
<div class="abs" style="left:267.00px;top:386.00px;width:8.40px;height:8.40px;background:#fff;border:1px solid #8e8e8e"></div>
<div class="abs" style="left:267.00px;top:420.00px;width:8.40px;height:8.40px;background:#fff;border:1px solid #8e8e8e"></div>
<div class="abs" style="left:417.00px;top:386.00px;width:8.40px;height:8.40px;background:#fff;border:1px solid #8e8e8e"></div>
<div class="abs" style="left:417.00px;top:420.00px;width:8.40px;height:8.40px;background:#fff;border:1px solid #8e8e8e"></div>
<div class="abs" style="left:569.00px;top:386.00px;width:8.40px;height:8.40px;background:#fff;border:1px solid #8e8e8e"></div>
<div class="abs" style="left:569.00px;top:420.00px;width:8.40px;height:8.40px;background:#fff;border:1px solid #8e8e8e"></div>
<div class="abs" style="left:421.00px;top:372.00px;width:1.00px;height:15.00px;background:#b0b0b0"></div>
<svg style="left:408.79999999999995px;top:347px" width="26" height="26" viewBox="0 0 26 26"><circle cx="12.6" cy="12.7" r="12.6" fill="#ffffff" fill-opacity="0.9"/><path d="M5.2 13.4 A7.4 7.4 0 1 1 12.6 20.1" fill="none" stroke="#b4b4b4" stroke-width="1.1"/><path d="M3 12 L5.3 14.6 L7.8 12.2 Z" fill="#b4b4b4" stroke="none"/><circle cx="12.6" cy="12.7" r="2" fill="none" stroke="#b4b4b4" stroke-width="1"/></svg>
<div class="abs" style="left:69.00px;top:557.00px;width:255.00px;height:42.00px;background:#f2f2f2"></div>
<div class="abs" style="left:327.00px;top:558.00px;width:811.00px;height:41.00px;background:#f2f2f2"></div>
<div class="t" style="left:69.00px;top:569.07px;font-size:20px;line-height:20px;color:#1a1a0e;font-weight:bold;font-style:italic;">Date of Birth</div>
<div class="t" style="left:327.00px;top:569.07px;font-size:20px;line-height:20px;color:#1a1a0e;font-weight:bold;font-style:italic;">Nationality and residence</div>
<div class="fb" style="left:68.00px;top:607.00px;width:245.00px;height:34.50px;"></div>
<div class="t" style="left:63.31px;width:40px;text-align:center;top:614.76px;font-size:18px;line-height:18px;color:#74869f">D</div>
<div class="t" style="left:93.94px;width:40px;text-align:center;top:614.76px;font-size:18px;line-height:18px;color:#74869f">D</div>
<div class="abs" style="left:98.12px;top:608.00px;width:1.00px;height:33.00px;background:#a9c5d8"></div>
<div class="t" style="left:124.56px;width:40px;text-align:center;top:614.76px;font-size:18px;line-height:18px;color:#74869f">M</div>
<div class="abs" style="left:128.75px;top:608.00px;width:1.00px;height:33.00px;background:#a9c5d8"></div>
<div class="t" style="left:155.19px;width:40px;text-align:center;top:614.76px;font-size:18px;line-height:18px;color:#74869f">M</div>
<div class="abs" style="left:159.38px;top:608.00px;width:1.00px;height:33.00px;background:#a9c5d8"></div>
<div class="t" style="left:185.81px;width:40px;text-align:center;top:614.76px;font-size:18px;line-height:18px;color:#74869f">Y</div>
<div class="abs" style="left:190.00px;top:608.00px;width:1.00px;height:33.00px;background:#a9c5d8"></div>
<div class="t" style="left:216.44px;width:40px;text-align:center;top:614.76px;font-size:18px;line-height:18px;color:#74869f">Y</div>
<div class="abs" style="left:220.62px;top:608.00px;width:1.00px;height:33.00px;background:#a9c5d8"></div>
<div class="t" style="left:247.06px;width:40px;text-align:center;top:614.76px;font-size:18px;line-height:18px;color:#74869f">Y</div>
<div class="abs" style="left:251.25px;top:608.00px;width:1.00px;height:33.00px;background:#a9c5d8"></div>
<div class="t" style="left:277.69px;width:40px;text-align:center;top:614.76px;font-size:18px;line-height:18px;color:#74869f">Y</div>
<div class="abs" style="left:281.88px;top:608.00px;width:1.00px;height:33.00px;background:#a9c5d8"></div>
<div class="t" style="left:326.00px;top:604.76px;font-size:18px;line-height:18px;color:#000;">Country of permanent</div>
<div class="t" style="left:326.00px;top:626.06px;font-size:18px;line-height:18px;color:#000;">residence</div>
<div class="t" style="left:92.00px;top:655.76px;font-size:18px;line-height:18px;color:#000;">DD</div>
<div class="t" style="left:143.00px;top:655.76px;font-size:18px;line-height:18px;color:#000;">MM</div>
<div class="t" style="left:208.50px;top:655.76px;font-size:18px;line-height:18px;color:#000;">YYYY</div>
<div class="t" style="left:326.00px;top:655.76px;font-size:18px;line-height:18px;color:#000;">Country of birth</div>
<div class="abs" style="left:68.00px;top:683.00px;width:257.00px;height:36.00px;background:#f2f2f2"></div>
<div class="t" style="left:68.30px;top:691.07px;font-size:20px;line-height:20px;color:#1a1a0e;font-weight:bold;font-style:italic;">Sex</div>
<div class="t" style="left:326.00px;top:692.76px;font-size:18px;line-height:18px;color:#000;">Nationality</div>
<div class="abs" style="left:68.00px;top:725.00px;width:19.00px;height:26.40px;background:#cbdfff"></div>
<svg style="left:65.95px;top:728.90px" width="20" height="20" viewBox="0 0 20 20"><ellipse cx="10" cy="10" rx="7.3" ry="6.9" fill="none" stroke="#000" stroke-width="1.45"/></svg>
<div class="t" style="left:91.00px;top:731.76px;font-size:18px;line-height:18px;color:#000;">Male</div>
<div class="abs" style="left:149.00px;top:725.00px;width:19.00px;height:26.40px;background:#cbdfff"></div>
<svg style="left:146.95px;top:728.90px" width="20" height="20" viewBox="0 0 20 20"><ellipse cx="10" cy="10" rx="7.3" ry="6.9" fill="none" stroke="#000" stroke-width="1.45"/></svg>
<div class="t" style="left:172.20px;top:731.76px;font-size:18px;line-height:18px;color:#000;">Female</div>
<div class="t" style="left:326.00px;top:729.76px;font-size:18px;line-height:18px;color:#000;">Any second nationality</div>
<div class="fg" style="left:539.00px;top:607.00px;width:298.00px;height:35.00px;"></div>
<div class="t" style="left:543.00px;top:614.76px;font-size:18px;line-height:18px;color:#76945f;">Country of permanent residence</div>
<div class="fg" style="left:539.00px;top:648.00px;width:299.00px;height:34.00px;"></div>
<div class="t" style="left:543.00px;top:655.26px;font-size:18px;line-height:18px;color:#76945f;">Country of birth</div>
<div class="fg" style="left:539.00px;top:684.00px;width:298.00px;height:34.50px;"></div>
<div class="t" style="left:543.00px;top:692.76px;font-size:18px;line-height:18px;color:#76945f;">Nationality</div>
<div class="fg" style="left:539.00px;top:722.00px;width:298.00px;height:38.00px;"></div>
<div class="t" style="left:543.00px;top:729.76px;font-size:18px;line-height:18px;color:#76945f;">Any second nationality</div>
<div class="t" style="left:849.00px;top:604.76px;font-size:18px;line-height:18px;color:#000;">Do you require a visa to study in the</div>
<div class="t" style="left:849.00px;top:626.06px;font-size:18px;line-height:18px;color:#000;">UK?</div>
<div class="abs" style="left:855.00px;top:647.00px;width:19.00px;height:25.60px;background:#cbdfff"></div>
<svg style="left:853.70px;top:650.00px" width="20" height="20" viewBox="0 0 20 20"><ellipse cx="10" cy="10" rx="7.3" ry="6.9" fill="none" stroke="#000" stroke-width="1.45"/></svg>
<div class="t" style="left:879.20px;top:651.76px;font-size:18px;line-height:18px;color:#000;">Yes</div>
<div class="abs" style="left:929.00px;top:647.00px;width:19.00px;height:25.60px;background:#cbdfff"></div>
<svg style="left:927.70px;top:650.00px" width="20" height="20" viewBox="0 0 20 20"><ellipse cx="10" cy="10" rx="7.3" ry="6.9" fill="none" stroke="#000" stroke-width="1.45"/></svg>
<div class="t" style="left:953.50px;top:651.76px;font-size:18px;line-height:18px;color:#000;">No</div>
<div class="t" style="left:849.00px;top:692.76px;font-size:18px;line-height:18px;color:#000;">Current UK visa status,if applicable:</div>
<div class="fb" style="left:850.00px;top:722.00px;width:267.00px;height:38.00px;overflow:hidden"><div class="t" style="left:3.5px;top:6.76px;font-size:18px;line-height:18px;color:#74869f">Current UK visa status,if applicable:</div></div>
</div>
<div class="abs" style="left:1528.00px;top:1.00px;width:15.00px;height:16.00px;background:#f7f7f7;border:1px solid #cfcfcf;border-radius:1px"></div>
<div class="abs" style="left:1528.00px;top:18.00px;width:15.00px;height:60.00px;background:#f7f7f7;border:1px solid #cfcfcf;border-radius:1px"></div>
<div class="abs" style="left:1528.00px;top:795.50px;width:15.00px;height:15.50px;background:#f7f7f7;border:1px solid #cfcfcf;border-radius:1px"></div>
<svg style="left:1531px;top:6px" width="9" height="6" viewBox="1580 159 9 6" fill="none" stroke="#444" stroke-width="1.25"><path d="M1580.8 164 L1584.1 160 L1587.4 164 Z" fill="#adadad" stroke="none"/></svg>
<svg style="left:1531px;top:800px" width="9" height="6" viewBox="1580 953 9 6" fill="none" stroke="#444" stroke-width="1.25"><path d="M1580.8 954.4 L1584.1 958.4 L1587.4 954.4 Z" fill="#adadad" stroke="none"/></svg>
<svg style="left:1531px;top:37px" width="10" height="20" viewBox="1580 190 10 20" fill="#bdbdbd"><rect x="1581.6" y="193.0" width="5.8" height="0.9"/><rect x="1581.6" y="195.0" width="5.8" height="0.9"/><rect x="1581.6" y="197.0" width="5.8" height="0.9"/><rect x="1581.6" y="199.0" width="5.8" height="0.9"/><rect x="1581.6" y="201.0" width="5.8" height="0.9"/><rect x="1581.6" y="203.0" width="5.8" height="0.9"/><rect x="1581.6" y="205.0" width="5.8" height="0.9"/></svg>
</div>
<div id="rp">
<div class="lbl" style="left:19.00px;top:11.86px;line-height:13.75px;color:#444;font-weight:bold">Text field</div>
<div class="lbl" style="left:19.00px;top:40.86px;line-height:13.75px;color:#444;">Who needs to fill this out?</div>
<div class="abs" style="left:19.00px;top:58.00px;width:242.00px;height:27.00px;background:#fff;border:1px solid #c0c0c0;border-radius:2px;"></div>
<div class="abs" style="left:26.00px;top:64.50px;width:15.00px;height:14.00px;background:#cbdfff;border:1px solid #b4c8e6"></div>
<div class="lbl" style="left:51.00px;top:65.36px;line-height:13.75px;color:#444;">Anyone</div>
<svg style="left:247.00px;top:69.00px" width="8" height="6" viewBox="0 0 8 6"><path d="M0.8 1 L4 4.4 L7.2 1" fill="none" stroke="#444" stroke-width="1.3"/></svg>
<div class="abs" style="left:19.00px;top:95.00px;width:243.00px;height:1.00px;background:#dfdfdf"></div>
<div class="lbl" style="left:19.00px;top:108.36px;line-height:13.75px;color:#444;">Key</div>
<div class="abs" style="left:19.00px;top:126.00px;width:243.00px;height:27.00px;background:#fff;border:1px solid #c0c0c0;border-radius:2px;"></div>
<div class="lbl" style="left:24.00px;top:133.36px;line-height:13.75px;color:#444;">Text1</div>
<svg style="left:247.00px;top:137.00px" width="8" height="6" viewBox="0 0 8 6"><path d="M0.8 1 L4 4.4 L7.2 1" fill="none" stroke="#444" stroke-width="1.3"/></svg>
<div class="lbl" style="left:19.00px;top:166.36px;line-height:13.75px;color:#444;">Placeholder</div>
<div class="abs" style="left:19.00px;top:183.00px;width:243.00px;height:27.50px;background:#fff;border:1px solid #c0c0c0;border-radius:2px;"></div>
<div class="lbl" style="left:24.00px;top:190.36px;line-height:13.75px;color:#444;">Please enter a last name</div>
<div class="lbl" style="left:19.00px;top:224.36px;line-height:13.75px;color:#444;">Tag</div>
<div class="abs" style="left:19.00px;top:240.00px;width:243.00px;height:27.50px;background:#fff;border:1px solid #c0c0c0;border-radius:2px;"></div>
<div class="lbl" style="left:19.00px;top:281.36px;line-height:13.75px;color:#444;">Tip</div>
<div class="abs" style="left:19.00px;top:297.00px;width:243.00px;height:44.50px;background:#fff;border:1px solid #c0c0c0;border-radius:2px;"></div>
<div class="lbl" style="left:24.00px;top:303.36px;line-height:13.75px;color:#444;">Please enter a last name</div>
<div class="lbl" style="left:19.00px;top:355.36px;line-height:13.75px;color:#444;">Default value</div>
<div class="abs" style="left:19.00px;top:372.00px;width:243.00px;height:27.00px;background:#fff;border:1px solid #c0c0c0;border-radius:2px;"></div>
<div class="abs" style="left:19.00px;top:409.00px;width:243.00px;height:1.00px;background:#dfdfdf"></div>
<div class="lbl" style="left:19.00px;top:423.36px;line-height:13.75px;color:#444;">Format</div>
<div class="abs" style="left:19.00px;top:440.00px;width:243.00px;height:27.50px;background:#fff;border:1px solid #c0c0c0;border-radius:2px;"></div>
<div class="lbl" style="left:24.00px;top:447.36px;line-height:13.75px;color:#444;">None</div>
<svg style="left:247.00px;top:451.50px" width="8" height="6" viewBox="0 0 8 6"><path d="M0.8 1 L4 4.4 L7.2 1" fill="none" stroke="#444" stroke-width="1.3"/></svg>
<div class="lbl" style="left:19.00px;top:480.86px;line-height:13.75px;color:#444;">Allowed symbols</div>
<div class="abs" style="left:19.00px;top:497.00px;width:243.00px;height:27.50px;background:#fff;border:1px solid #c0c0c0;border-radius:2px;"></div>
<div class="abs" style="left:19.00px;top:535.00px;width:17.00px;height:17.00px;background:#fff;border:1px solid #c0c0c0;border-radius:2px;"></div>
<svg style="left:19px;top:535.00px" width="17" height="17" viewBox="0 0 17 17"><path d="M4 8.6 L7.2 11.8 L13 5.2" fill="none" stroke="#333" stroke-width="1.9"/></svg>
<div class="lbl" style="left:46.50px;top:538.36px;line-height:13.75px;color:#444;">Fixed size field</div>
<div class="abs" style="left:19.00px;top:564.00px;width:17.00px;height:17.00px;background:#fff;border:1px solid #c0c0c0;border-radius:2px;"></div>
<div class="lbl" style="left:46.50px;top:567.36px;line-height:13.75px;color:#444;">AutoFit</div>
<div class="abs" style="left:19.00px;top:594.00px;width:17.00px;height:17.00px;background:#fff;border:1px solid #c0c0c0;border-radius:2px;"></div>
<div class="lbl" style="left:46.50px;top:597.36px;line-height:13.75px;color:#444;">Multiline field</div>
<div class="abs" style="left:19.00px;top:624.00px;width:243.00px;height:1.00px;background:#dfdfdf"></div>
<div class="abs" style="left:19.00px;top:640.00px;width:17.00px;height:17.00px;background:#fff;border:1px solid #c0c0c0;border-radius:2px;"></div>
<div class="lbl" style="left:46.50px;top:642.86px;line-height:13.75px;color:#444;">Characters limit</div>
<div class="abs" style="left:205.00px;top:635.00px;width:57.00px;height:26.50px;background:#f7f7f7;border:1px solid #dcdcdc;border-radius:2px;"></div>
<div class="lbl" style="left:185px;width:52px;text-align:right;top:641.86px;line-height:13.75px;color:#b8b8b8">10</div>
<svg style="left:245.50px;top:639.50px" width="8" height="18" viewBox="0 0 8 18"><path d="M1 5 L4 2 L7 5 M1 13 L4 16 L7 13" fill="none" stroke="#b8b8b8" stroke-width="1"/></svg>
<div class="abs" style="left:19.00px;top:672.00px;width:17.00px;height:17.00px;background:#fff;border:1px solid #c0c0c0;border-radius:2px;"></div>
<div class="lbl" style="left:46.50px;top:674.86px;line-height:13.75px;color:#444;">Comb of characters</div>
<div class="lbl" style="left:46.50px;top:705.36px;line-height:13.75px;color:#444;">Cell width</div>
<div class="abs" style="left:46.00px;top:721.00px;width:102.50px;height:27.50px;background:#f7f7f7;border:1px solid #dcdcdc;border-radius:2px;"></div>
<div class="lbl" style="left:51.50px;top:729.86px;line-height:13.75px;color:#b8b8b8;">Exactly</div>
<svg style="left:135.50px;top:732.00px" width="8" height="6" viewBox="0 0 8 6"><path d="M0.8 1 L4 4.4 L7.2 1" fill="none" stroke="#b8b8b8" stroke-width="1.1"/></svg>
<div class="abs" style="left:159.00px;top:721.00px;width:103.00px;height:27.50px;background:#f7f7f7;border:1px solid #dcdcdc;border-radius:2px;"></div>
<div class="lbl" style="left:165px;width:72px;text-align:right;top:728.86px;line-height:13.75px;color:#b8b8b8">0.3 cm</div>
<svg style="left:245.50px;top:726.00px" width="8" height="18" viewBox="0 0 8 18"><path d="M1 5 L4 2 L7 5 M1 13 L4 16 L7 13" fill="none" stroke="#b8b8b8" stroke-width="1"/></svg>
<div class="abs" style="left:19.00px;top:759.00px;width:243.00px;height:1.00px;background:#dfdfdf"></div>
<div class="lbl" style="left:19.00px;top:778.36px;line-height:13.75px;color:#444;">Border color</div>
<div class="abs" style="left:205.00px;top:770.00px;width:57.00px;height:26.50px;background:#fff;border:1px solid #c0c0c0;border-radius:2px;"></div>
<div class="abs" style="left:207.00px;top:772.00px;width:40.00px;height:22.50px;background:#b2cdd6;border:1px solid #a3bcc5"></div>
<svg style="left:249.50px;top:781.00px" width="8" height="6" viewBox="0 0 8 6"><path d="M0.8 1 L4 4.4 L7.2 1" fill="none" stroke="#444" stroke-width="1.3"/></svg>
<div class="abs" style="left:205.00px;top:807.00px;width:57.00px;height:26.00px;background:#fff;border:1px solid #c0c0c0;border-radius:2px;"></div>
<svg style="left:207.5px;top:809px" width="40" height="22" viewBox="0 0 40 22"><path d="M40 0 L0 22" stroke="#ff2020" stroke-width="1.3"/></svg>
</div>
<div id="ri">
<div class="abs" style="left:0;top:399px;width:41px;height:37px;background:#cbcbcb"></div>
<svg style="left:18px;top:29px" width="14" height="18" viewBox="1888 182 14 18" fill="none" stroke="#b4b4b4" stroke-width="1.25"><path d="M1895.4 184 H1900 M1895.4 184 V197.8 M1898.6 184 V197.8" stroke-width="1.2"/><path d="M1895.4 183.6 H1893.6 A4.3 4.3 0 0 0 1893.6 192.2 H1895.4 Z" fill="#b4b4b4" stroke="none"/></svg>
<svg style="left:14px;top:77px" width="21" height="16" viewBox="1884 230 21 16" fill="none" stroke="#b4b4b4" stroke-width="1.25"><rect x="1885.4" y="231.4" width="18.4" height="13.2" stroke-width="1.4"/><path d="M1885.4 236 H1903.8 M1885.4 240.2 H1903.8 M1891.6 231.4 V244.6 M1897.6 231.4 V244.6" stroke-width="1.3"/></svg>
<svg style="left:15px;top:123px" width="19" height="19" viewBox="1885 276 19 19" fill="none" stroke="#b4b4b4" stroke-width="1.25"><rect x="1886.6" y="277.6" width="16" height="16" stroke-width="1.2"/><circle cx="1890.2" cy="281.4" r="1.6" stroke-width="1"/><path d="M1886.6 288.6 L1889.6 286.6 L1891.6 288.6 L1896.8 284.4 L1902.6 289.8" stroke-width="1.1"/></svg>
<svg style="left:16px;top:169px" width="17" height="22" viewBox="1886 322 17 22" fill="none" stroke="#b4b4b4" stroke-width="1.25"><rect x="1887.8" y="324" width="13.6" height="18.4" stroke-width="1.2"/><path d="M1889.4 326.8 H1899.8 M1889.4 339.8 H1899.8" stroke-width="1.6"/></svg>
<svg style="left:15px;top:218px" width="20" height="20" viewBox="1885 371 20 20" fill="none" stroke="#444" stroke-width="1.25"><path d="M1890.4 381.8 H1886.6 V373 H1896.4 V375.8" stroke-width="1.25"/><circle cx="1896.6" cy="382.2" r="6.2" stroke-width="1.25"/></svg>
<svg style="left:15px;top:265px" width="19" height="19" viewBox="1885 418 19 19" fill="none" stroke="#b4b4b4" stroke-width="1.25"><rect x="1886.6" y="430.2" width="4" height="5.2" stroke-width="1.1"/><rect x="1892.4" y="425.2" width="4" height="10.2" stroke-width="1.1"/><rect x="1898.2" y="419.8" width="4.2" height="15.6" stroke-width="1.1"/></svg>
<div class="abs" style="left:16.59999999999991px;top:310.5px;font-size:15.5px;line-height:16px;color:#b4b4b4;letter-spacing:-0.6px">Ta</div>
<svg style="left:16px;top:327px" width="17" height="7" viewBox="1886 480 17 7" fill="none" stroke="#b4b4b4" stroke-width="1.25"><path d="M1888 485.2 Q1894.4 479.6 1900.8 485.2" stroke-width="1.1"/></svg>
<svg style="left:14px;top:358px" width="23" height="23" viewBox="1884 511 23 23" fill="none" stroke="#b4b4b4" stroke-width="1.25"><path d="M1886 527.4 C1888 522 1890.6 517.6 1889.4 514.2 C1888.4 512.4 1887 514.4 1887.4 518 C1888 523.2 1889.2 530 1890.8 531 C1892.4 531.6 1892 526.6 1890.4 524.6 C1893 524.8 1894.6 522.8 1896.4 523.4" stroke-width="1"/><path d="M1893.6 532.4 L1894.6 527.4 L1902.4 515.8 L1905 517.6 L1897.4 529.4 Z M1900.4 518.6 L1903.2 520.4" stroke-width="1"/></svg>
<svg style="left:13px;top:411px" width="23" height="15" viewBox="1883 564 23 15" fill="none" stroke="#444" stroke-width="1.25"><rect x="1884.8" y="566" width="19" height="10.6" stroke="#222" stroke-width="1.5"/><path d="M1887.6 568.2 V574.4 M1886.4 568.2 H1888.8 M1886.4 574.4 H1888.8" stroke="#222" stroke-width="1.1"/></svg>
</div>
<div id="sb">
<div class="lbl" style="left:49.50px;top:8.86px;line-height:13.75px;font-weight:bold;color:#333">Page 1 of 6</div>
<div class="lbl" style="left:169.80px;top:8.86px;line-height:13.75px;font-weight:bold;color:#333">Word count</div>
<div class="lbl" style="left:1312.40px;top:8.36px;line-height:13.75px;font-weight:bold;color:#333">English (United States)</div>
<div class="lbl" style="left:1751.40px;top:8.86px;line-height:13.75px;font-weight:bold;color:#333">Zoom 120%</div>
<div class="abs" style="left:131.00px;top:0.00px;width:1.00px;height:29.00px;background:#dedede"></div>
<div class="abs" style="left:1295.00px;top:0.00px;width:1.00px;height:29.00px;background:#dedede"></div>
<div class="abs" style="left:1559.00px;top:0.00px;width:1.00px;height:29.00px;background:#dedede"></div>
<div class="abs" style="left:1621.00px;top:0.00px;width:1.00px;height:29.00px;background:#dedede"></div>
<svg style="left:143px;top:6px" width="18" height="18" viewBox="143 972 18 18" fill="none" stroke="#333" stroke-width="1.25"><path d="M144 973.6 H159 M144 976.4 H159 M144 979.2 H153.8" stroke-width="1"/></svg>
<div class="abs" style="left:143.6px;top:16px;font-size:8.6px;line-height:9px;color:#333;letter-spacing:0.1px">123</div>
<svg style="left:1469px;top:12px" width="9" height="6" viewBox="1469 978 9 6" fill="none" stroke="#444" stroke-width="1.25"><path d="M1470.2 979.4 L1473.5 982.8 L1476.8 979.4" stroke-width="1.2"/></svg>
<svg style="left:1487px;top:5px" width="21" height="21" viewBox="1487 971 21 21" fill="none" stroke="#444" stroke-width="1.25"><circle cx="1497.5" cy="981.4" r="9.2" stroke-width="1.15"/><ellipse cx="1497.5" cy="981.4" rx="4.4" ry="9.2" stroke-width="1.1"/><path d="M1497.5 972.2 V990.6 M1488.3 981.4 H1506.7 M1489.8 976.4 H1505.2 M1489.8 986.4 H1505.2" stroke-width="1.1"/></svg>
<div class="abs" style="left:1525.4px;top:7.399999999999977px;font-size:9.6px;line-height:10px;color:#333;letter-spacing:-0.3px">ABC</div>
<svg style="left:1533px;top:13px" width="12" height="10" viewBox="1533 979 12 10" fill="none" stroke="#333" stroke-width="1.25"><path d="M1534.6 984 L1537.6 987.2 L1543.6 980.2" stroke-width="1.4"/></svg>
<svg style="left:1573px;top:5px" width="21" height="21" viewBox="1573 971 21 21" fill="none" stroke="#444" stroke-width="1.25"><path d="M1574.4 974.4 L1576.2 976.2 L1579.6 972.4 M1582.4 972.4 L1586.8 976.8 M1586.8 972.4 L1582.4 976.8" stroke-width="1"/><path d="M1574.2 980.6 H1584 M1574.2 984.6 H1581 M1574.2 988.6 H1578.2" stroke-width="1.1"/><path d="M1581 990 L1581.8 986.4 L1589.6 978.6 L1592.4 981.4 L1584.6 989.2 Z M1588 980.4 L1590.6 983" stroke-width="1.05"/></svg>
<svg style="left:1598px;top:12px" width="9" height="6" viewBox="1598 978 9 6" fill="none" stroke="#444" stroke-width="1.25"><path d="M1599.6 979.6 L1602.8 983 L1606 979.6" stroke-width="1.2"/></svg>
<svg style="left:1638px;top:5px" width="17" height="21" viewBox="1638 971 17 21" fill="none" stroke="#444" stroke-width="1.25"><rect x="1639.6" y="972.8" width="13.8" height="17.6" stroke-width="1.2"/><path d="M1646.5 974.6 V979 M1644.6 976.4 L1646.5 974.4 L1648.4 976.4 M1646.5 988.6 V984.2 M1644.6 986.8 L1646.5 988.8 L1648.4 986.8 M1641.4 981.6 H1644.4 M1643 980 L1641.2 981.6 L1643 983.2 M1651.6 981.6 H1648.6 M1650 980 L1651.8 981.6 L1650 983.2" stroke-width="0.9"/></svg>
<svg style="left:1674px;top:8px" width="23" height="15" viewBox="1674 974 23 15" fill="none" stroke="#444" stroke-width="1.25"><path d="M1675.5 975 V988 M1694.6 975 V988" stroke-width="1.1"/><path d="M1678 981.5 H1692.2 M1681 978.6 L1678 981.5 L1681 984.4 M1689.2 978.6 L1692.2 981.5 L1689.2 984.4" stroke-width="1.05"/></svg>
<div class="abs" style="left:1717.00px;top:15.00px;width:13.00px;height:1.00px;background:#333"></div>
<div class="abs" style="left:1850.00px;top:15.00px;width:13.00px;height:1.00px;background:#333"></div>
<div class="abs" style="left:1856.00px;top:9.00px;width:1.00px;height:13.00px;background:#333"></div>
<div class="abs" style="left:0.00px;top:28.00px;width:1911.00px;height:1.00px;background:#eadfec"></div>
</div>
</body>
</html>
